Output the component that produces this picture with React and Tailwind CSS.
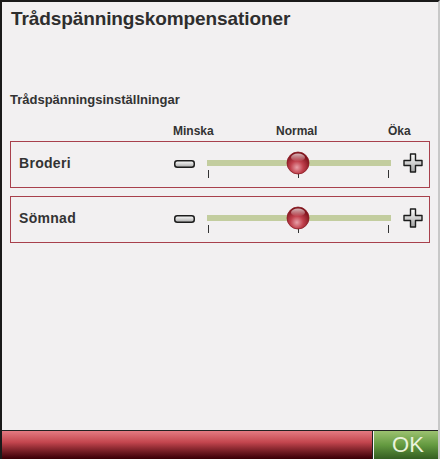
import React from 'react';

const rows = ['Broderi', 'Sömnad'];

// Minus button drawn as a rounded grey bar
const MinusIcon = () => (
    <svg width="21" height="8" viewBox="0 0 21 8">
        <defs>
            <linearGradient id="mg" x1="0" y1="0" x2="0" y2="1">
                <stop offset="0" stopColor="#ffffff" />
                <stop offset="1" stopColor="#a8a8a8" />
            </linearGradient>
        </defs>
        <rect x="0.75" y="0.75" width="19.5" height="6.5" rx="2.5" fill="url(#mg)" stroke="#1c1c1c" strokeWidth="1.5" />
    </svg>
);

// Plus button drawn as an outlined cross
const PlusIcon = () => (
    <svg width="20" height="20" viewBox="0 0 20 20">
        <defs>
            <linearGradient id="pg" x1="0" y1="0" x2="0" y2="1">
                <stop offset="0" stopColor="#ffffff" />
                <stop offset="1" stopColor="#a0a0a0" />
            </linearGradient>
        </defs>
        <path
            d="M7.5 1 H12.5 V7.5 H19 V12.5 H12.5 V19 H7.5 V12.5 H1 V7.5 H7.5 Z"
            fill="url(#pg)"
            stroke="#1c1c1c"
            strokeWidth="1.4"
            strokeLinejoin="round"
        />
    </svg>
);

const Knob = () => (
    <svg width="24" height="24" viewBox="0 0 24 24">
        <defs>
            <radialGradient id="kg" cx="0.45" cy="0.7" r="0.65">
                <stop offset="0" stopColor="#e8a0a8" />
                <stop offset="0.45" stopColor="#c0404c" />
                <stop offset="1" stopColor="#7a0f18" />
            </radialGradient>
            <linearGradient id="kh" x1="0" y1="0" x2="0" y2="1">
                <stop offset="0" stopColor="#ffffff" stopOpacity="0.7" />
                <stop offset="1" stopColor="#ffffff" stopOpacity="0" />
            </linearGradient>
        </defs>
        <circle cx="12" cy="12" r="11" fill="url(#kg)" stroke="#8a1a22" strokeWidth="0.8" />
        <ellipse cx="12" cy="6.5" rx="7" ry="4" fill="url(#kh)" />
    </svg>
);

const Slider = () => (
    <div className="relative w-[184px] h-[30px]">
        <div className="absolute left-0 right-0 top-[10px] h-[6px] bg-[#c3cd9f]" />
        <div className="absolute left-[1px] top-[20px] w-px h-[8px] bg-[#333]" />
        <div className="absolute left-[91px] top-[20px] w-px h-[8px] bg-[#333]" />
        <div className="absolute left-[181px] top-[20px] w-px h-[8px] bg-[#333]" />
        <div className="absolute left-[79px] top-[1px]">
            <Knob />
        </div>
    </div>
);

const App = () => {
    return (
        <div
            className="w-[440px] h-[459px] flex flex-col bg-[#f2f0f1] border-2 border-b-0 border-r-[#c8c8c8] border-[#1a1a1a] overflow-hidden text-[#333]"
            style={{ fontFamily: '"Liberation Sans", Arial, sans-serif' }}
        >
            <div className="px-[9px] pt-[5px] h-[30px] text-[19px] font-bold leading-[24px] tracking-[-0.1px] text-[#2e2e2e]">
                Trådspänningskompensationer
            </div>

            <div className="mt-[59px] px-[8px] text-[13px] font-bold leading-[18px]">
                Trådspänningsinställningar
            </div>

            <div className="mt-[15px] relative h-[14px] text-[12px] font-bold leading-[14px]">
                <span className="absolute left-[171px]">Minska</span>
                <span className="absolute left-[274px]">Normal</span>
                <span className="absolute left-[386px]">Öka</span>
            </div>

            <div className="flex flex-col gap-[8px] mt-[3px] px-[8px]">
                {rows.map((name) => (
                    <div
                        key={name}
                        className="h-[47px] flex items-center border border-[#a8404c] pl-[8px] pr-[6px]"
                    >
                        <span className="flex-1 text-[14px] font-bold tracking-[0.3px] -mt-[2px]">{name}</span>
                        <div className="-mt-[2px]">
                            <MinusIcon />
                        </div>
                        <div className="ml-[12px]">
                            <Slider />
                        </div>
                        <div className="ml-[12px] -mt-[3px]">
                            <PlusIcon />
                        </div>
                    </div>
                ))}
            </div>

            <div className="flex-1" />

            <div className="h-[29px] flex border-t border-[#222]">
                <div className="flex-1 border-r border-[#222] bg-gradient-to-b from-[#e47a82] via-[#c4464f] via-40% to-[#3a0006]" />
                <button className="w-[65px] border-l border-[#f4f4f4] bg-gradient-to-b from-[#9cc270] via-[#649a40] to-[#345e22] text-[#eaf2dc] text-[22px] leading-[28px] text-center pl-[4px]">
                    OK
                </button>
            </div>
        </div>
    );
};

export default App;
